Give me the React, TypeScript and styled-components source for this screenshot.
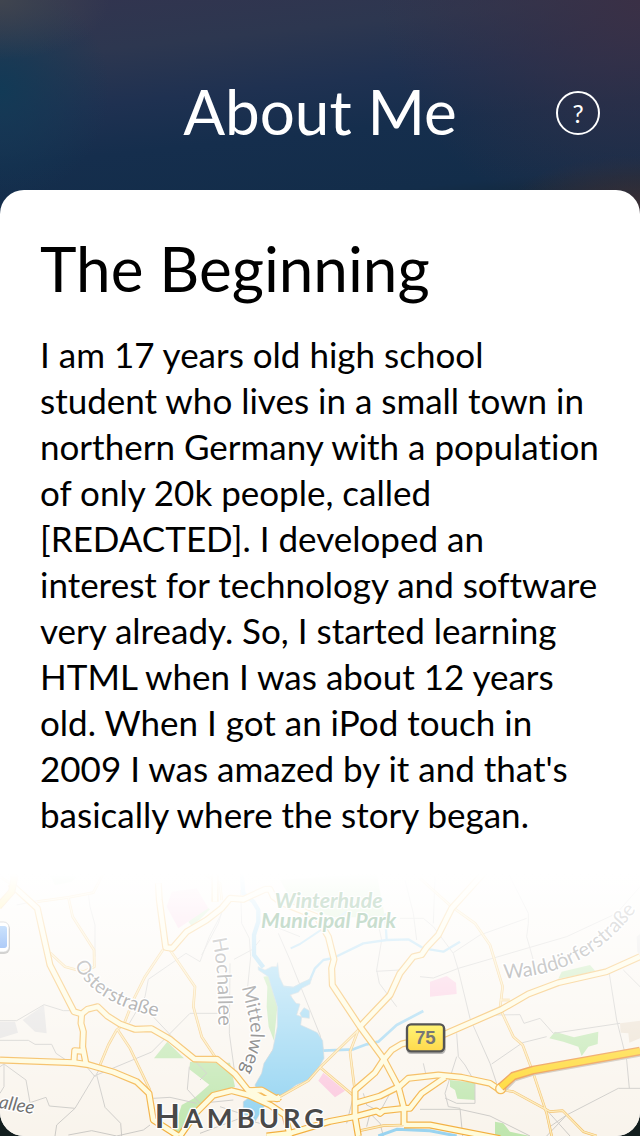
import React from "react";
import styled, { createGlobalStyle } from "styled-components";

const GlobalStyle = createGlobalStyle`
  * { box-sizing: border-box; }
  body {
    margin: 0;
    background: #131e1e;
    font-family: Lato, "Open Sans", sans-serif;
    font-variant-ligatures: none;
  }
`;

const Page = styled.div`
  min-height: 100vh;
  display: flex;
  flex-direction: column;
  background:
    radial-gradient(ellipse 110px 60px at 0 0, #40454f 0%, #40454f00 100%),
    radial-gradient(ellipse 110px 110px at 0 90px, #123a56 0%, #123a5600 100%),
    radial-gradient(ellipse 130px 50px at 100% 205px, #392f36 0%, #392f3600 100%),
    radial-gradient(ellipse 260px 230px at 100% 0, #3a3046 0%, #3a304600 100%),
    linear-gradient(174deg, #32344f 0, #2d3750 60px, #1f3151 115px, #152e4d 165px, #132d4a 230px, #131e1e 300px);
`;

const Header = styled.header`
  display: grid;
  grid-template-columns: 44px 1fr 44px;
  align-items: center;
  height: 190px;
  padding: 36px 40px 0;
  color: #fff;
`;

const Title = styled.h1`
  grid-column: 2;
  margin: 0;
  padding-bottom: 4px;
  font-size: 62px;
  line-height: 72px;
  font-weight: 400;
  text-align: center;
`;

const HelpButton = styled.button`
  width: 44px;
  height: 44px;
  padding: 0;
  border: 2px solid #fff;
  border-radius: 50%;
  background: none;
  color: inherit;
  font: 400 25px/40px Lato, sans-serif;
`;

const Card = styled.main`
  flex: 1;
  display: flex;
  flex-direction: column;
  overflow: hidden;
  border-radius: 24px;
  background: #fff;
  color: #000;
`;

const Story = styled.section`
  padding: 42px 40px 0;
`;

const Heading = styled.h2`
  margin: 0 0 27px;
  font-size: 62px;
  line-height: 72px;
  font-weight: 400;
`;

const Paragraph = styled.p`
  margin: 0;
  font-size: 35px;
  line-height: 46px;
`;

const MapDrawing = styled.svg`
  display: block;
  width: 100%;
  height: auto;
  margin-top: auto;
`;

const Label = styled.text`
  font-family: Lato, sans-serif;
  paint-order: stroke;
  stroke: #fff;
  stroke-width: 8px;
  stroke-linejoin: round;
`;

const parks = [
  "M462 595L502 545L552 595Z",
  "M570 606L690 608L705 680L632 708L588 755L540 826L520 815L545 735L582 715L628 674L568 628Z",
  "M790 350L806 348L832 440L822 542L806 500L800 440L802 380Z",
  "M1350 660L1425 668L1425 720L1372 716L1365 690L1350 680Z",
  "M1648 535L1665 515L1722 532L1795 515L1793 552L1765 560L1745 588L1735 560L1690 545Z",
  "M1675 356L1685 335L1770 315L1785 332L1750 342Z",
  "M1485 785L1510 790L1530 815L1590 828L1485 828Z",
  "M565 185L620 140L630 148L600 178L575 198Z",
  "M150 45L230 50L215 65L165 75Z",
  "M840 60L1130 40L1155 172L1000 172L880 130Z",
];
const pinks = [
  "M500 140L515 95L590 85L625 145L535 205Z",
  "M955 662L970 638L1035 692L1005 712Z",
  "M1290 365L1340 348L1368 368L1370 402L1290 410Z",
];
const greys = ["M68 480L132 435L140 520L105 515Z", "M0 485L45 485L54 518L0 535Z", "M1910 230L1920 222V285L1912 275Z"];

const lanes = [
  "M0 482H50L132 434L190 452H245", "M0 541H85L105 553H155L168 580L195 598", "M0 620L12 612L78 660L90 728L138 712L148 738L225 745L285 645",
  "M225 745L170 795L165 828", "M12 612V680L0 700", "M455 576L290 645L315 742L362 790L365 828", "M258 618L285 650L300 625",
  "M205 825L275 812L350 828L430 810L450 795", "M388 490L435 410L445 358L558 280L600 305L628 230L665 160",
  "M265 100L270 140L285 195V290", "M50 135L112 122", "M455 576L570 460H680", "M450 460L620 640L600 660", "M568 620L562 688L600 730L700 720",
  "M460 715L510 712L590 730", "M690 310L688 520L705 645L745 690", "M680 110L655 190L605 285", "M722 90L725 190L748 235L752 290L742 390",
  "M702 298L758 268L780 240", "M835 220L870 300L960 525L970 572", "M800 190L900 230", "M1130 170L1145 240L1130 330L1138 370L1190 440",
  "M1128 334L1200 330", "M1200 175H1270L1300 200L1360 280L1375 330L1410 475", "M1215 60L1240 160L1250 240", "M1305 45L1300 190",
  "M1525 40L1585 160V190L1580 230L1600 300L1610 340", "M1360 278L1440 225L1580 175", "M1260 350L1300 354L1375 325L1700 230L1850 160L1920 80",
  "M1410 475L1470 610L1490 670", "M1370 520L1375 590L1395 615L1415 650", "M1370 590L1335 700L1345 740L1380 745L1388 828",
  "M1335 714L1370 730H1425V660", "M1480 465L1560 464L1572 490L1620 475L1660 520L1860 490", "M1475 612L1568 548L1640 530",
  "M1828 342L1850 480L1880 600L1888 685", "M1870 330L1920 380", "M1650 800L1700 765L1855 685H1920", "M1640 750L1710 828M1700 765L1640 828",
  "M1260 748H1380L1470 768L1590 828", "M1270 610L1278 645", "M1065 690L1040 790", "M1140 755L1100 735L1090 700", "M1140 755L1170 700", "M1100 800L1110 760L1140 790L1150 828",
  "M870 385L880 470L800 600", "M600 820L720 775L800 795", "M660 740L750 770L765 720",
];

const streets = [
  "M112 125L205 112L280 98L310 40", "M205 112L218 170L282 270L283 320L250 335L195 320L150 278", "M490 268L435 350L400 420L372 492L350 510L325 555L300 615",
  "M352 508L390 565L450 690", "M510 270L585 380L580 440L605 530L645 590", "M1075 510L960 622L925 662L840 710", "M960 622L1062 708",
  "M1075 510L1050 575L1063 680", "M1260 55L1355 140L1425 190L1470 255L1508 380L1500 445L1540 530L1568 555L1600 640L1640 760L1655 828",
  "M1510 690L1540 695L1650 755L1688 752L1750 815L1790 828", "M1500 420L1530 420", "M1080 812L1150 797L1210 795", "M0 50L30 70L45 95",
  "M610 40L660 70L665 120",
];

const roads = [
  "M30 70L112 145L150 315L222 455L245 462L262 448L293 440L322 468L360 492L405 508L455 506L510 538L583 597L652 598L705 642L745 692L785 690L830 716L840 710",
  "M0 600L222 608L265 614L340 636L410 665L447 700L460 780L535 828",
  "M245 462L243 490L250 515L248 560L258 612M222 604L224 572L248 574",
  "M540 828L590 756L640 706L695 692L745 705L810 735L855 765L870 828M745 690L790 715H840",
  "M475 70L478 120L482 150L497 262L517 265L560 215L620 180L665 145L690 115L730 118L795 88L810 88L820 110L845 128L950 170L985 230L1002 298L995 325L997 375L1080 500L1150 595L1195 680L1212 745V795",
  "M645 40V125",
  "M1080 500L1170 405L1200 340L1240 290L1265 284L1280 262L1315 225L1355 145L1450 40",
  "M1075 828L1065 770V690L1125 638L1150 600L1175 570L1205 552L1335 522L1505 448L1585 402L1675 368L1820 335L1920 290",
  "M1065 730L1140 708L1200 678L1225 655L1315 645L1385 652L1470 670L1500 690",
  "M800 828L870 820L990 784L1065 770L1130 753L1140 760L1150 752L1215 745H1230L1265 700L1335 652",
  "M1212 795H1290L1500 836",
];

const channels = [
  { d: "M725 40L730 100L760 125L775 150V185L762 225V285L790 322", w: 13 },
  { d: "M850 380L880 384L930 360L945 325L970 300L1000 294L1090 250L1160 240L1225 238L1270 265L1330 275L1380 245", w: 7 },
  { d: "M872 265L900 252L970 205L1040 155", w: 6 },
  { d: "M1155 160L1160 240", w: 7 },
  { d: "M970 572L1060 568L1100 553L1135 545L1190 495L1270 453", w: 8 },
  { d: "M1135 828L1190 808L1290 812L1370 828", w: 9 },
];

function CityMap() {
  return (
    <MapDrawing viewBox="0 0 1920 828" role="img" aria-label="Map of Hamburg">
      <defs>
        <linearGradient id="fade" x1="0" y1="0" x2="0" y2="1">
          <stop offset="0" stopColor="#fff" />
          <stop offset="0.05" stopColor="#fff" />
          <stop offset="0.25" stopColor="#fff" stopOpacity="0.78" />
          <stop offset="0.6" stopColor="#fff" stopOpacity="0.42" />
          <stop offset="1" stopColor="#fff" stopOpacity="0" />
        </linearGradient>
        <linearGradient id="shield" x1="0" y1="0" x2="0" y2="1">
          <stop offset="0" stopColor="#fff475" />
          <stop offset="1" stopColor="#ffd94c" />
        </linearGradient>
        <linearGradient id="marker" x1="0" y1="0" x2="0" y2="1">
          <stop offset="0" stopColor="#cbe2fc" />
          <stop offset="1" stopColor="#aecbf8" />
        </linearGradient>
        <path id="oster" d="M224 314C265 400 355 450 520 480" />
        <path id="hoch" d="M636 236C650 300 655 360 655 520" />
        <path id="mittel" d="M726 382C735 430 753 480 752 520C751 565 735 600 714 655" />
        <path id="wald" d="M1512 356C1660 350 1800 300 1915 140" />
      </defs>

      <rect width="1920" height="828" fill="#f9f4ec" />
      <g fill="#bfe6ae">{parks.map((d) => <path key={d} d={d} />)}</g>
      <g fill="#fbc7dd">{pinks.map((d) => <path key={d} d={d} />)}</g>
      <g fill="#e2e0de">{greys.map((d) => <path key={d} d={d} />)}</g>
      <path d="M1860 490L1920 482V535L1888 548L1885 520L1862 518Z" fill="#ece0cf" />

      <g fill="none" stroke="#cbc9c5" strokeWidth="3">{lanes.map((d) => <path key={d} d={d} />)}</g>

      <g fill="none" stroke="#98d3f0" strokeLinejoin="round">
        {channels.map(({ d, w }) => <path key={d} d={d} strokeWidth={w} />)}
      </g>
      <path
        d="M774 320L795 330L815 320H830L833 308L838 350L852 380L880 382L905 368L935 355L930 372L905 385L895 397L870 405L888 430L900 432L890 465L905 470L902 495L935 510L952 518L968 542L972 595L955 625L925 660L888 675L845 708L820 716L770 690L765 675L785 640L792 610L818 570L832 500V440L812 375L805 350L775 330ZM730 725L745 715L795 735L765 785L730 760ZM900 460L912 443L928 452V475L905 472Z"
        fill="#8fd2f1"
        stroke="#c4cfd3"
        strokeWidth="2"
      />

      <g fill="none" strokeLinejoin="round">
        <g stroke="#f2bf68" strokeWidth="8">{streets.map((d) => <path key={d} d={d} />)}</g>
        <g stroke="#fdebb9" strokeWidth="4">{streets.map((d) => <path key={d} d={d} />)}</g>
        <g stroke="#f3ae3c" strokeWidth="21">{roads.map((d) => <path key={d} d={d} />)}</g>
        <g stroke="#fffbd9" strokeWidth="14">{roads.map((d) => <path key={d} d={d} />)}</g>
        <path d="M-5 140L35 95L42 60V25" stroke="#f1a93f" strokeWidth="22" />
        <path d="M-5 140L35 95L42 60V25" stroke="#ffdd48" strokeWidth="16" />
        <path d="M1506 690L1542 654L1600 636L1920 579" stroke="#c9c2b5" strokeWidth="22" />
        <circle cx="1502" cy="686" r="15" fill="#fffbd9" stroke="#f3ae3c" strokeWidth="4" />
        <path d="M1502 682L1540 648L1600 630L1920 573" stroke="#eb8f3a" strokeWidth="26" />
        <path d="M1502 682L1540 648L1600 630L1920 573" stroke="#ffd61f" strokeWidth="18" />
      </g>

      <g fill="#6f6f6f">
        <Label fontSize="58"><textPath href="#oster">Osterstraße</textPath></Label>
        <Label fontSize="60"><textPath href="#hoch">Hochallee</textPath></Label>
        <Label fontSize="58" fill="#5c5c5c"><textPath href="#mittel">Mittelweg</textPath></Label>
        <Label fontSize="60"><textPath href="#wald">Walddörferstraße</textPath></Label>
        <Label x="100" y="762" textAnchor="end" fontStyle="italic" fontSize="56" fill="#5f5f5f" transform="rotate(10 100 762)">allee</Label>
      </g>

      <rect width="1920" height="828" fill="url(#fade)" />

      <g fill="#c9decf" fontStyle="italic" fontWeight="700" fontSize="64" textAnchor="middle">
        <Label x="986" y="145" fill="#d6e6da">Winterhude</Label>
        <Label x="986" y="205">Municipal Park</Label>
      </g>

      <rect x="-30" y="190" width="60" height="92" rx="18" fill="#aaa" opacity="0.5" />
      <rect x="-30" y="186" width="57" height="90" rx="16" fill="#fff" stroke="#d4d4d4" strokeWidth="2" />
      <rect x="-30" y="198" width="51" height="66" rx="8" fill="url(#marker)" />

      <rect x="1219" y="496" width="118" height="86" rx="14" fill="#777" opacity="0.5" />
      <rect x="1221" y="493" width="111" height="81" rx="12" fill="url(#shield)" stroke="#555" strokeWidth="7" />
      <text x="1276" y="553" textAnchor="middle" fontFamily="Liberation Sans, sans-serif" fontWeight="700" fontSize="56" fill="#777">75</text>

      <Label x="464" y="805" fontWeight="700" fontSize="98" fill="#494949" letterSpacing="12">
        H<tspan fontSize="82">AMBURG</tspan>
      </Label>
    </MapDrawing>
  );
}

export default function App() {
  return (
    <>
      <GlobalStyle />
      <Page>
        <Header>
          <Title>About Me</Title>
          <HelpButton type="button" aria-label="Help">?</HelpButton>
        </Header>
        <Card>
          <Story>
            <Heading>The Beginning</Heading>
            <Paragraph>
              I am 17 years old high school student who lives in a small town in northern Germany with a
              population of only 20k people, called [REDACTED]. I developed an interest for technology and
              software very already. So, I started learning HTML when I was about 12 years old. When I got an
              iPod touch in 2009 I was amazed by it and that's basically where the story began.
            </Paragraph>
          </Story>
          <CityMap />
        </Card>
      </Page>
    </>
  );
}
